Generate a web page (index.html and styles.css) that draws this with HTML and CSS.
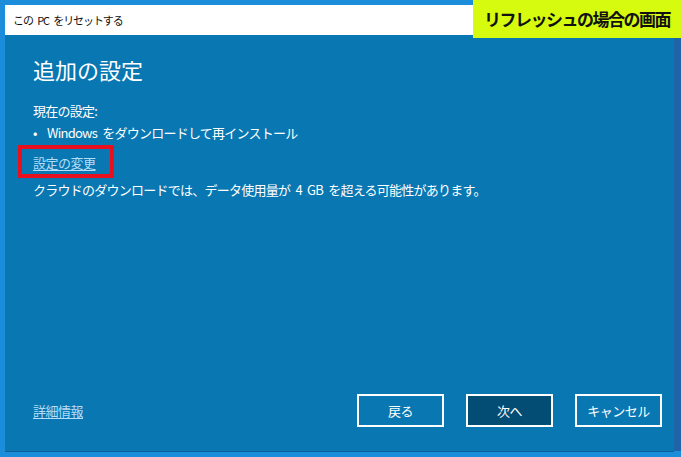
FILE: index.html
```html
<!DOCTYPE html>
<html lang="ja">
<head>
    <meta charset="UTF-8">
    <title>この PC をリセットする</title>
    <link rel="stylesheet" href="styles.css">
</head>
<body>
    <div class="dialog">
        <div class="title-bar">この PC をリセットする</div>
        <div class="content">
            <h1>追加の設定</h1>
            <p class="label">現在の設定:</p>
            <p class="bullet">•&nbsp;&nbsp;Windows をダウンロードして再インストール</p>
            <div class="highlight"><a href="#" class="link">設定の変更</a></div>
            <p class="note">クラウドのダウンロードでは、データ使用量が 4 GB を超える可能性があります。</p>

            <div class="footer">
                <a href="#" class="link">詳細情報</a>
                <div class="buttons">
                    <button>戻る</button>
                    <button class="primary">次へ</button>
                    <button>キャンセル</button>
                </div>
            </div>
        </div>
    </div>

    <div class="caption">リフレッシュの場合の画面</div>
</body>
</html>
```

FILE: styles.css
```css
body {
    margin: 0;
    width: 681px;
    height: 457px;
    overflow: hidden;
    background: #1b8ddb;
    font-family: "Noto Sans CJK JP", "Noto Sans", sans-serif;
    padding: 5px 0 0 5px;
    box-sizing: border-box;
}

.dialog {
    width: 669px;
    height: 446px;
    display: flex;
    flex-direction: column;
    box-shadow: 7px 0 0 #1f64a6, 0 1px 0 #0d5f96;
}

.title-bar {
    height: 30px;
    background: #fff;
    color: #111;
    font-size: 11px;
    letter-spacing: -1.1px;
    word-spacing: 3px;
    line-height: 30px;
    padding-left: 8px;
}

.content {
    flex: 1;
    background: #0877b2;
    color: #fff;
    padding: 19px 12px 0 28px;
    display: flex;
    flex-direction: column;
}

h1 {
    margin: 0;
    font-size: 22px;
    font-weight: normal;
    line-height: 30px;
}

p {
    margin: 0;
    font-size: 13px;
    letter-spacing: -0.75px;
    word-spacing: 3px;
    line-height: 22px;
}

.label {
    margin-top: 16px;
}

.highlight {
    margin: 1px 0 0 -15px;
    width: 77px;
    height: 25px;
    border: 4px solid #e8101e;
    padding-left: 11px;
    line-height: 25px;
}

.link {
    color: #b6ddf6;
    font-size: 13px;
    letter-spacing: -0.5px;
    text-decoration: underline;
    text-underline-offset: 2px;
}

.note {
    margin-top: 1px;
}

.footer {
    margin-top: auto;
    display: flex;
    align-items: center;
    justify-content: space-between;
    padding-bottom: 24px;
}

.buttons {
    display: flex;
    gap: 22px;
}

button {
    width: 87px;
    height: 33px;
    background: transparent;
    border: 2px solid #fff;
    color: #fff;
    font-family: inherit;
    font-size: 13px;
    letter-spacing: -0.5px;
    padding: 0;
}

button.primary {
    background: #034d74;
}

.caption {
    position: absolute;
    top: 0;
    right: 0;
    width: 208px;
    height: 38px;
    background: #d6fb0f;
    color: #111;
    font-size: 17px;
    font-weight: bold;
    letter-spacing: -1.5px;
    line-height: 38px;
    text-align: center;
}
```
